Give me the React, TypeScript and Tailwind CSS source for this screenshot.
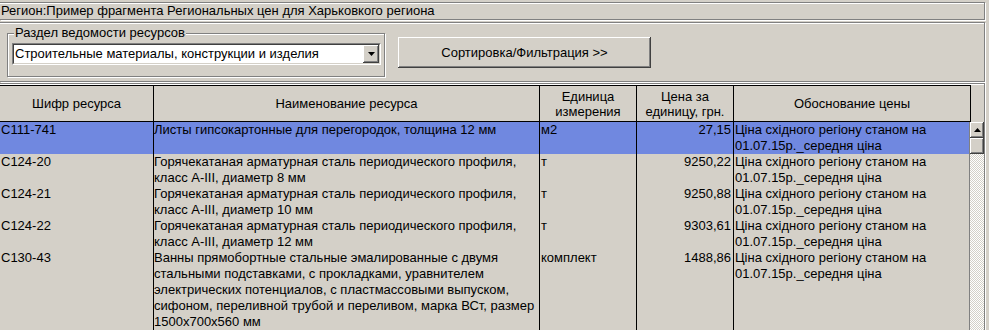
import React from "react";

type Row = {
  code: string;
  name: string[];
  unit: string;
  price: string;
  basis: string[];
  selected?: boolean;
};

const basis = ["Ціна східного регіону станом на", "01.07.15р._середня ціна"];

const rows: Row[] = [
  {
    code: "С111-741",
    name: ["Листы гипсокартонные для перегородок, толщина 12 мм"],
    unit: "м2",
    price: "27,15",
    basis,
    selected: true,
  },
  {
    code: "С124-20",
    name: ["Горячекатаная арматурная сталь периодического профиля,", "класс A-III, диаметр 8 мм"],
    unit: "т",
    price: "9250,22",
    basis,
  },
  {
    code: "С124-21",
    name: ["Горячекатаная арматурная сталь периодического профиля,", "класс A-III, диаметр 10 мм"],
    unit: "т",
    price: "9250,88",
    basis,
  },
  {
    code: "С124-22",
    name: ["Горячекатаная арматурная сталь периодического профиля,", "класс A-III, диаметр 12 мм"],
    unit: "т",
    price: "9303,61",
    basis,
  },
  {
    code: "С130-43",
    name: [
      "Ванны прямобортные стальные эмалированные с двумя",
      "стальными подставками, с прокладками, уравнителем",
      "электрических потенциалов, с пластмассовыми выпуском,",
      "сифоном, переливной трубой и переливом, марка ВСт, размер",
      "1500x700x560 мм",
    ],
    unit: "комплект",
    price: "1488,86",
    basis,
  },
];

const raised =
  "shadow-[inset_-1px_-1px_0_#404040,inset_1px_1px_0_#ffffff,inset_-2px_-2px_0_#808080,inset_2px_2px_0_#d4d0c8]";

function Lines({ lines }: { lines: string[] }) {
  return (
    <>
      {lines.map((l, i) => (
        <div key={i} className="whitespace-nowrap">
          {l}
        </div>
      ))}
    </>
  );
}

export default function App() {
  return (
    <div className="w-[989px] h-[330px] overflow-hidden bg-[#d4d0c8] text-black text-[13px] leading-[16px] font-['Liberation_Sans',Arial,sans-serif]">
      {/* Region title panel */}
      <div className="mt-[2px] w-[985px] h-[18px] border-y border-r border-[#808080] shadow-[inset_0_1px_0_#ffffff,1px_1px_0_#ffffff] flex items-center pl-[1px]">
        <span className="whitespace-nowrap">Регион:Пример фрагмента Региональных цен для Харьковкого региона</span>
      </div>

      {/* Controls panel */}
      <div className="mt-[2px] w-[985px] h-[60px] border-y border-r border-[#808080] shadow-[inset_0_1px_0_#ffffff,1px_1px_0_#ffffff] flex items-start">
        <div className="relative ml-[7px] mt-[10px] w-[378px] h-[44px] border border-[#808080] shadow-[inset_1px_1px_0_#ffffff,1px_1px_0_#ffffff]">
          <div className="absolute -top-[9px] left-[6px] px-[1px] bg-[#d4d0c8] whitespace-nowrap">
            Раздел ведомости ресурсов
          </div>
          <div className="ml-[4px] mt-[9px] w-[369px] h-[22px] bg-white flex items-center border border-t-[#808080] border-l-[#808080] border-b-white border-r-white">
            <div className="flex-1 h-full flex items-center border border-t-[#404040] border-l-[#404040] border-b-[#d4d0c8] border-r-[#d4d0c8]">
              <span className="flex-1 pl-[1px] whitespace-nowrap">Строительные материалы, конструкции и изделия</span>
              <div className={`w-[16px] h-full bg-[#d4d0c8] flex items-center justify-center ${raised}`}>
                <svg width="7" height="4" viewBox="0 0 7 4">
                  <path d="M0 0H7L3.5 4Z" fill="#000" />
                </svg>
              </div>
            </div>
          </div>
        </div>
        <div className={`ml-[13px] mt-[14px] w-[253px] h-[31px] flex items-center justify-center whitespace-nowrap ${raised}`}>
          Сортировка/Фильтрация &gt;&gt;
        </div>
      </div>

      {/* Grid panel */}
      <div className="mt-[1px] w-[985px] h-[260px] border-t border-r border-[#808080] shadow-[inset_0_1px_0_#ffffff,1px_0_0_#ffffff] pt-[1px] flex flex-col overflow-hidden">
        {/* header */}
        <div className="grid grid-cols-[153px_386px_97px_97px_238px] w-[971px] h-[37px] border-y border-black text-center">
          <div className="flex items-center justify-center">Шифр ресурса</div>
          <div className="flex items-center justify-center border-l border-black">Наименование ресурса</div>
          <div className="flex items-center justify-center border-l border-black leading-[15px]">
            Единица
            <br />
            измерения
          </div>
          <div className="flex items-center justify-center border-l border-black leading-[15px]">
            Цена за
            <br />
            единицу, грн.
          </div>
          <div className="flex items-center justify-center border-x border-black">Обоснование цены</div>
        </div>

        {/* body */}
        <div className="flex flex-1 min-h-0">
          <div className="w-[969px] flex flex-col">
            {rows.map((r, i) => (
              <div
                key={i}
                className={`grid grid-cols-[153px_386px_97px_97px_236px] ${r.selected ? "bg-[#7088e0]" : ""}`}
                style={{ height: Math.max(r.name.length, r.basis.length) * 16 }}
              >
                <div className="pl-[1px] whitespace-nowrap">{r.code}</div>
                <div className="border-l border-black">
                  <Lines lines={r.name} />
                </div>
                <div className="border-l border-black pl-[1px] whitespace-nowrap">{r.unit}</div>
                <div className="border-l border-black pr-[2px] text-right whitespace-nowrap">{r.price}</div>
                <div className="border-l border-black pl-[1px]">
                  <Lines lines={r.basis} />
                </div>
              </div>
            ))}
            <div className="flex-1 grid grid-cols-[153px_386px_97px_97px_236px]">
              <div />
              <div className="border-l border-black" />
              <div className="border-l border-black" />
              <div className="border-l border-black" />
              <div className="border-l border-black" />
            </div>
          </div>
          {/* scrollbar */}
          <div className="w-[15px] flex flex-col border-l border-[#808080] bg-[image:repeating-conic-gradient(#ffffff_0%_25%,#d4d0c8_0%_50%)] bg-[length:2px_2px]">
            <div className={`h-[16px] bg-[#d4d0c8] flex items-center justify-center ${raised}`}>
              <svg width="7" height="4" viewBox="0 0 7 4">
                <path d="M0 4H7L3.5 0Z" fill="#000" />
              </svg>
            </div>
            <div className={`h-[16px] bg-[#d4d0c8] ${raised}`} />
          </div>
        </div>
      </div>
    </div>
  );
}
